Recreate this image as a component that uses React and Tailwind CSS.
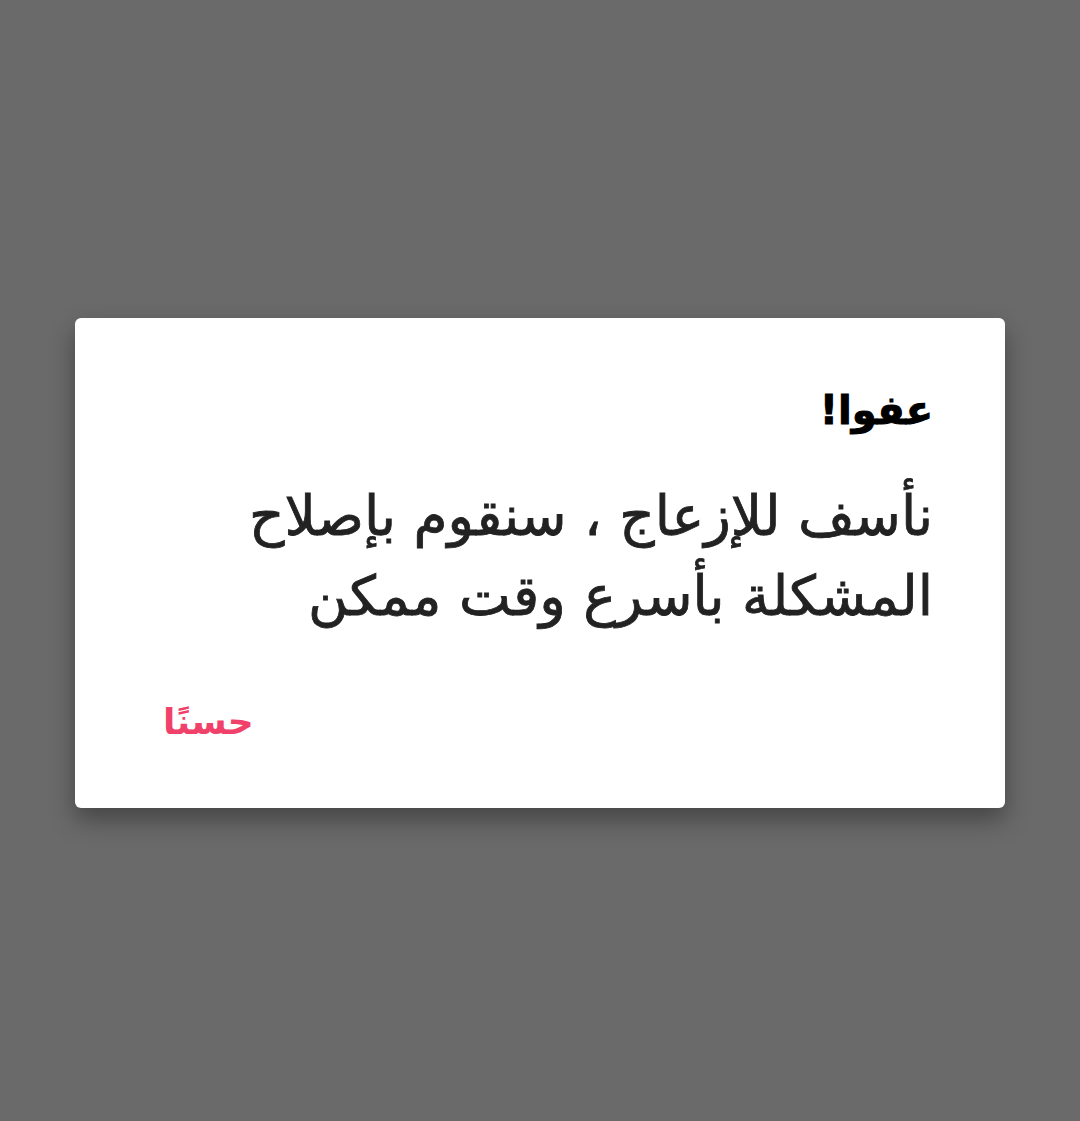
export default function App() {
  return (
    <div className="min-h-[1121px] w-full bg-[#6a6a6a] flex items-start justify-center pt-[318px]" dir="rtl">
      <div className="w-[930px] h-[490px] bg-white rounded-[6px] shadow-[0_12px_24px_rgba(0,0,0,0.35)] pr-[72px] pl-[88px] pt-[62px] flex flex-col">
        <h1 className="text-[40px] leading-[60px] font-bold text-black [-webkit-text-stroke:1px_#000]" style={{ fontFamily: '"DejaVu Sans", sans-serif' }}>
          عفوا!
        </h1>
        <p className="mt-[36px] text-[55px] leading-[80px] text-[#222] [-webkit-text-stroke:0.8px_#222]" style={{ fontFamily: '"DejaVu Sans", sans-serif' }}>
          نأسف للإزعاج ، سنقوم بإصلاح
          <br />
          المشكلة بأسرع وقت ممكن
        </p>
        <div className="flex justify-end mt-[66px]">
          <button className="text-[36px] font-bold text-[#f0416b] leading-[40px]" style={{ fontFamily: '"DejaVu Sans", sans-serif' }}>
            حسنًا
          </button>
        </div>
      </div>
    </div>
  );
}
